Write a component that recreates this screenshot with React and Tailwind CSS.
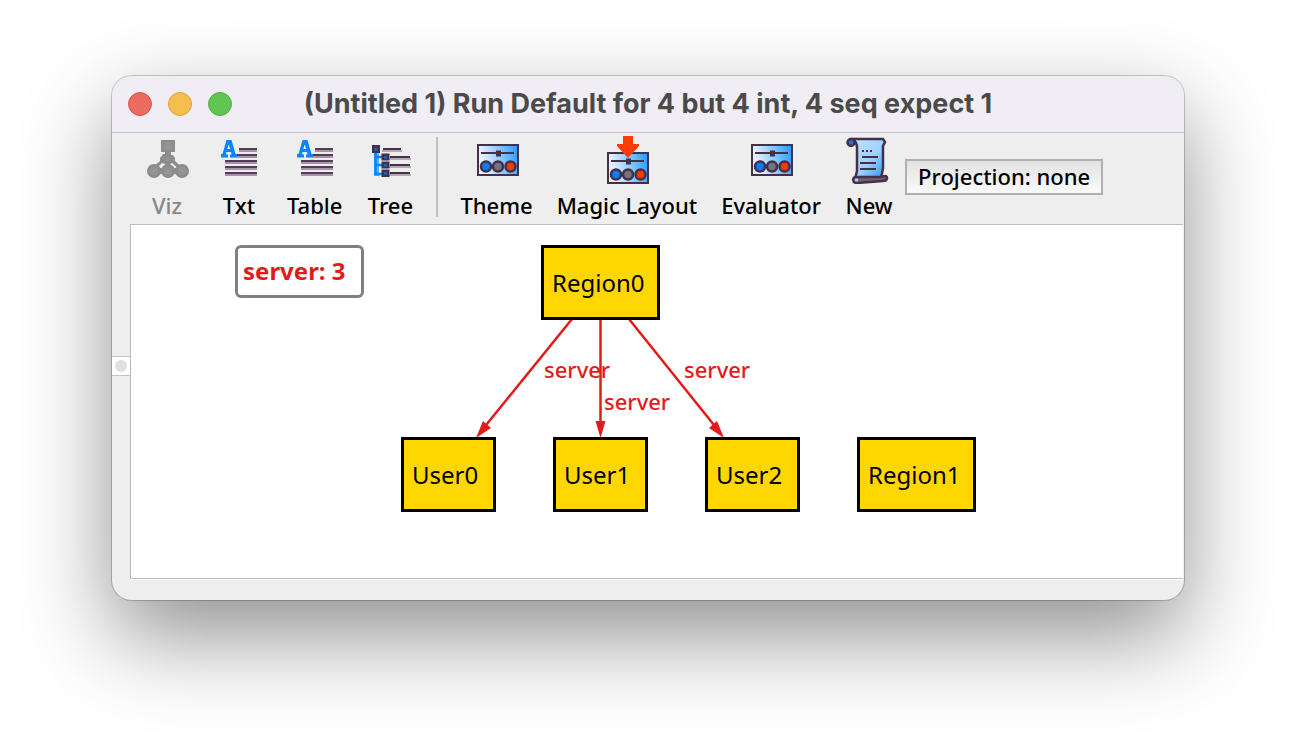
const INK = "#453047";
const BLUE = "#0a84ff";

function VizIcon() {
  return (
    <svg className="size-12" viewBox="0 0 48 48" fill="#8c8c8c" aria-hidden="true">
      <path d="M18 4h14v12h-4v3h2l2 3v3l9 8h-5l-7-6-2 1v5h-5v-5l-3-1-6 6H8l9-8v-3l3-4h2v-2h-4z" />
      <circle cx="11" cy="35" r="7" />
      <circle cx="25" cy="35" r="7" />
      <circle cx="39" cy="35" r="7" />
      <path d="M10 32h30v6H10z" />
      <g fill="#949494">
        <path d="M21 7h8v6h-8z" />
        <circle cx="11" cy="35" r="4" />
        <circle cx="25" cy="35" r="4" />
        <circle cx="39" cy="35" r="4" />
        <circle cx="25" cy="23" r="2" />
      </g>
    </svg>
  );
}

function TextIcon() {
  return (
    <svg className="size-12" viewBox="0 0 48 48" shapeRendering="crispEdges" aria-hidden="true">
      <path fill="#a395a5" d="M24 14h18v2H24zM22 20h20v2H22zM10 26h32v2H10zM10 32h32v2H10zM10 38h32v2H10z" />
      <path fill="#543c58" d="M24 12h18v2H24zM22 18h20v2H22zM10 24h32v2H10zM10 30h32v2H10zM10 36h32v2H10z" />
      <path
        fill={BLUE}
        fillRule="evenodd"
        shapeRendering="auto"
        d="M11.500 4h5L20.500 18H22v3.500h-7V18.500h1.500L16 16h-4.500L11 18.500h2v3H6V18h1.500zM13.800 8.500l-1.600 4.500h3z"
      />
    </svg>
  );
}

function TreeIcon() {
  return (
    <svg className="size-12" viewBox="0 0 48 48" aria-hidden="true">
      <path fill="#b3abb4" d="M16 14h20v2H16zM23 22h22v2H23zM23 30h22v2H23zM23 38h22v2H23z" />
      <path fill={INK} d="M17 12h18v2H17zM24 20h20v2H24zM24 28h20v2H24zM24 36h20v2H24z" />
      <path fill="#5eadff" d="M8 17h5v23H8z" />
      <path fill="none" stroke={BLUE} strokeWidth="2.500" d="M9.500 16v22h7M10 21h6M10 29h6" />
      <path fill={INK} d="M6 9h8v8H6zM15.500 17.500h8v7h-8zM15.500 25.500h8v7h-8zM15.500 33.500h8v7.500h-8z" />
      <path fill="#1766c4" d="M8.500 11.500h3v3h-3zM18 20h3v2.500h-3zM18 28h3v2.500h-3zM18 36h3v2.500h-3z" />
    </svg>
  );
}

function Panel({ id }) {
  return (
    <>
      <defs>
        <linearGradient id={id} x1="0" y1="0.200" x2="1" y2="0">
          <stop offset="0.050" stopColor="#e6f3ff" />
          <stop offset="0.400" stopColor="#a0d2ff" />
          <stop offset="1" stopColor="#2694ff" />
        </linearGradient>
      </defs>
      <path fill={`url(#${id})`} stroke={INK} strokeWidth="2" d="M5 9h40v30H5z" />
      <path fill={INK} d="M8 16h33v2H8zM23 14.500h5v6h-5z" />
      <g stroke={INK} strokeWidth="2.500">
        <circle cx="13" cy="30.500" r="5" fill="#0a7dff" />
        <circle cx="25" cy="30.500" r="5" fill="#75717f" />
        <circle cx="37.500" cy="30.500" r="5" fill="#ff3600" />
      </g>
    </>
  );
}

function PanelIcon({ id }) {
  return (
    <svg className="size-12" viewBox="0 0 48 48" aria-hidden="true">
      <Panel id={id} />
    </svg>
  );
}

function MagicIcon() {
  return (
    <svg className="size-12" viewBox="0 0 48 48" aria-hidden="true">
      <g transform="translate(0 8)">
        <Panel id="magic-panel" />
      </g>
      <path fill="#ff3c05" d="M20 0h10v8h6v2L25 22 14 10V8h6z" />
    </svg>
  );
}

function ScrollIcon() {
  return (
    <svg className="size-12" viewBox="0 0 48 48" aria-hidden="true">
      <defs>
        <linearGradient id="scroll-paper" x1="0" y1="0" x2="1" y2="1">
          <stop offset="0" stopColor="#c3e3ff" />
          <stop offset="0.550" stopColor="#a0d0ff" />
          <stop offset="1" stopColor="#2390ff" />
        </linearGradient>
      </defs>
      <path
        fill="url(#scroll-paper)"
        stroke={INK}
        strokeWidth="2.500"
        d="M6 3h32l2 3-2 4v22l-2 11H10l2-8V11c0-4-2-6-4-8z"
      />
      <circle cx="6" cy="6.500" r="3.500" fill="#1878e0" stroke={INK} strokeWidth="2.500" />
      <path fill="none" stroke={INK} strokeWidth="2" strokeDasharray="2 2" d="M17 15h10" />
      <path stroke={INK} strokeWidth="2" d="M17 21h16M15 27h16M15 33h16" />
      <path
        fill="#6b6374"
        stroke={INK}
        strokeWidth="2.500"
        d="M11 41h24c2 0 3-1 5-1 3 0 3 5-2 5l-26 2c-5 0-5-6-1-6z"
      />
      <circle cx="11.500" cy="44" r="1.800" fill="#9bcfff" />
    </svg>
  );
}

function Tool({ icon, label, disabled }) {
  return (
    <button
      type="button"
      disabled={disabled}
      className="flex min-w-12 flex-col items-center gap-[7px] whitespace-nowrap text-black disabled:text-[#868686]"
    >
      {icon}
      <span className="text-[22px] leading-7 font-medium">{label}</span>
    </button>
  );
}

function Node({ label, place }) {
  return (
    <div
      className={`absolute flex h-[75px] items-center border-3 border-black bg-[#ffd700] pl-2 text-[24px] leading-7 text-black ${place}`}
    >
      {label}
    </div>
  );
}

function EdgeLabel({ place }) {
  return <span className={`absolute text-[22px] leading-7 font-medium text-[#e31a1c] ${place}`}>server</span>;
}

export default function App() {
  return (
    <div className="min-h-screen bg-white px-28 py-[76px] font-['Noto_Sans',sans-serif]">
      <main className="overflow-hidden rounded-[20px] bg-[#eeeeee] shadow-[0_0_0_1px_rgba(0,0,0,0.2),0_36px_90px_rgba(0,0,0,0.44)]">
        <header className="flex h-[57px] items-center border-b border-[#c6c4c8] bg-[#f0edf4] px-4">
          <div className="flex flex-1 gap-4">
            <button type="button" aria-label="Close" className="size-6 rounded-full border border-[#d8564b] bg-[#ed6a5e]" />
            <button type="button" aria-label="Minimize" className="size-6 rounded-full border border-[#dba13d] bg-[#f5bf4f]" />
            <button type="button" aria-label="Zoom" className="size-6 rounded-full border border-[#52ac43] bg-[#61c554]" />
          </div>
          <h1 className="font-['Inter',sans-serif] text-[27px] leading-8 font-bold whitespace-nowrap text-[#4a4a4a]">
            (Untitled 1) Run Default for 4 but 4 int, 4 seq expect 1
          </h1>
          <div className="flex-1" />
        </header>

        <nav className="flex h-[91px] items-center gap-6 pb-[3px] pl-[31px]">
          <Tool icon={<VizIcon />} label="Viz" disabled />
          <Tool icon={<TextIcon />} label="Txt" />
          <Tool icon={<TextIcon />} label="Table" />
          <Tool icon={<TreeIcon />} label="Tree" />
          <div className="-mx-0.5 h-20 w-0.5 bg-[#c0c0c0]" />
          <Tool icon={<PanelIcon id="theme-panel" />} label="Theme" />
          <Tool icon={<MagicIcon />} label="Magic Layout" />
          <Tool icon={<PanelIcon id="evaluator-panel" />} label="Evaluator" />
          <div className="flex items-center gap-3">
            <Tool icon={<ScrollIcon />} label="New" />
            <button
              type="button"
              className="h-9 border-2 border-[#b0b0b0] bg-linear-to-b from-[#e2e2e2] to-[#fafafa] px-[11px] pb-0.5 text-[22px] leading-7 font-medium whitespace-nowrap text-black"
            >
              Projection: none
            </button>
          </div>
        </nav>

        <div className="flex pr-px pb-[21px]">
          <div className="flex w-[18px] items-center">
            <button
              type="button"
              aria-label="Toggle side panel"
              className="mb-[72px] flex h-5 w-full items-center justify-center border-y border-[#c4c4c4] bg-white"
            >
              <span className="size-3 rounded-full bg-[#e0e0e0]" />
            </button>
          </div>
          <section className="relative h-[355px] flex-1 border-y border-l border-[#bcbcbc] bg-white shadow-[0_1px_0_white]">
            <div className="absolute top-5 left-[104px] h-[53px] w-[129px] rounded-md border-3 border-[#808080] pt-[7px] pl-[5px] text-[24px] leading-8 font-bold whitespace-nowrap text-[#e31a1c]">
              server: 3
            </div>
            <svg className="absolute top-0 left-0" width="860" height="300" viewBox="0 0 860 300" aria-hidden="true">
              <g stroke="#e31a1c" strokeWidth="2.500">
                <path d="M441 94L351 205" />
                <path d="M469.500 94V205" />
                <path d="M498 94L587 205" />
              </g>
              <g fill="#e31a1c">
                <path d="M345 213L352 196L360 203Z" />
                <path d="M469.500 213L464.500 196H474.500Z" />
                <path d="M593 213L578 203L586 196Z" />
              </g>
            </svg>
            <Node label="Region0" place="top-5 left-[410px] w-[119px]" />
            <Node label="User0" place="top-[212px] left-[270px] w-[95px]" />
            <Node label="User1" place="top-[212px] left-[422px] w-[95px]" />
            <Node label="User2" place="top-[212px] left-[574px] w-[95px]" />
            <Node label="Region1" place="top-[212px] left-[726px] w-[119px]" />
            <EdgeLabel place="top-[130px] left-[413px]" />
            <EdgeLabel place="top-[162px] left-[473px]" />
            <EdgeLabel place="top-[130px] left-[553px]" />
          </section>
        </div>
      </main>
    </div>
  );
}
